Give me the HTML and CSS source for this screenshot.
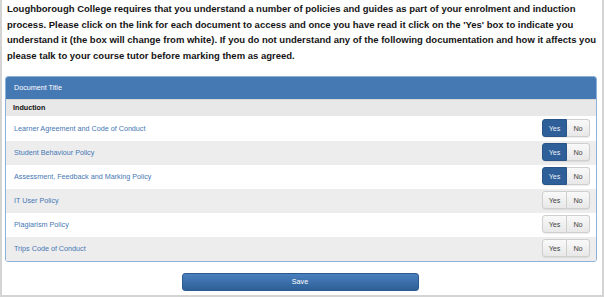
FILE: index.html
```html
<!DOCTYPE html>
<html>
<head>
<meta charset="utf-8">
<link rel="stylesheet" href="styles.css">
</head>
<body>
<div class="frame">
  <p class="intro">Loughborough College requires that you understand a number of policies and guides as part of your enrolment and induction process. Please click on the link for each document to access and once you have read it click on the 'Yes' box to indicate you understand it (the box will change from white). If you do not understand any of the following documentation and how it affects you please talk to your course tutor before marking them as agreed.</p>
  <div class="panel">
    <div class="panel-head">Document Title</div>
    <div class="group">Induction</div>
    <div class="row"><a class="doc">Learner Agreement and Code of Conduct</a><div class="toggle"><span class="btn yes on">Yes</span><span class="btn no">No</span></div></div>
    <div class="row alt"><a class="doc">Student Behaviour Policy</a><div class="toggle"><span class="btn yes on">Yes</span><span class="btn no">No</span></div></div>
    <div class="row"><a class="doc">Assessment, Feedback and Marking Policy</a><div class="toggle"><span class="btn yes on">Yes</span><span class="btn no">No</span></div></div>
    <div class="row alt"><a class="doc">IT User Policy</a><div class="toggle"><span class="btn yes">Yes</span><span class="btn no">No</span></div></div>
    <div class="row"><a class="doc">Plagiarism Policy</a><div class="toggle"><span class="btn yes">Yes</span><span class="btn no">No</span></div></div>
    <div class="row alt"><a class="doc">Trips Code of Conduct</a><div class="toggle"><span class="btn yes">Yes</span><span class="btn no">No</span></div></div>
  </div>
  <div class="actions"><button class="save">Save</button></div>
</div>
</body>
</html>
```
FILE: styles.css
```css
html, body { margin: 0; padding: 0; background: #fff; }
body { font-family: "Liberation Sans", Arial, sans-serif; }
.frame {
  width: 604px;
  height: 297px;
  box-sizing: border-box;
  border: 2px solid #d4d4d4;
  border-top: none;
  overflow: hidden;
}
.intro {
  margin: 0;
  padding: 1px 3px 0 5px;
  font-weight: bold;
  font-size: 9.5px;
  line-height: 15.7px;
  color: #151515;
}
.panel {
  margin: 12px 5px 0 3px;
  border: 1px solid #8eb0d6;
  border-radius: 3px;
  overflow: hidden;
}
.panel-head {
  background: #4579b4;
  color: #fff;
  font-size: 7.2px;
  height: 22px;
  line-height: 22px;
  padding-left: 8px;
}
.group {
  background: #e8e8e8;
  font-weight: bold;
  font-size: 7.2px;
  color: #111;
  height: 16px;
  line-height: 16px;
  padding-left: 7px;
  border-top: 1px solid #d8d8d8;
}
.row {
  display: flex;
  justify-content: space-between;
  align-items: flex-start;
  height: 24px;
  padding: 2px 6px 0 8px;
  box-sizing: border-box;
  background: #fff;
}
.row:nth-of-type(3) { height: 25px; padding-top: 3px; }
.row.alt { background: #ededee; }
.doc {
  font-size: 7.2px;
  color: #4677b3;
  line-height: 20px;
}
.toggle {
  display: flex;
  border-radius: 3px;
  box-shadow: 0 1px 1px rgba(0,0,0,0.08);
}
.btn {
  height: 18px;
  line-height: 18px;
  box-sizing: border-box;
  font-size: 7.2px;
  text-align: center;
  color: #444;
  background: linear-gradient(#f9f9f9, #e8e8e8);
  border: 1px solid #cfcfcf;
}
.btn.yes { width: 25px; border-radius: 3px 0 0 3px; }
.btn.no { width: 23px; border-left: none; border-radius: 0 3px 3px 0; }
.btn.yes.on {
  background: #2f5f98;
  border-color: #2a5488;
  color: #e8eef6;
}
.actions {
  display: flex;
  justify-content: center;
  margin-top: 11px;
  padding-right: 4px;
}
.save {
  width: 237px;
  height: 18px;
  padding: 0;
  font-family: "Liberation Sans", Arial, sans-serif;
  font-size: 7.2px;
  color: #fff;
  background: linear-gradient(#4a80bf, #2e5f97);
  border: 1px solid #2d5a8c;
  border-radius: 3px;
}
```
